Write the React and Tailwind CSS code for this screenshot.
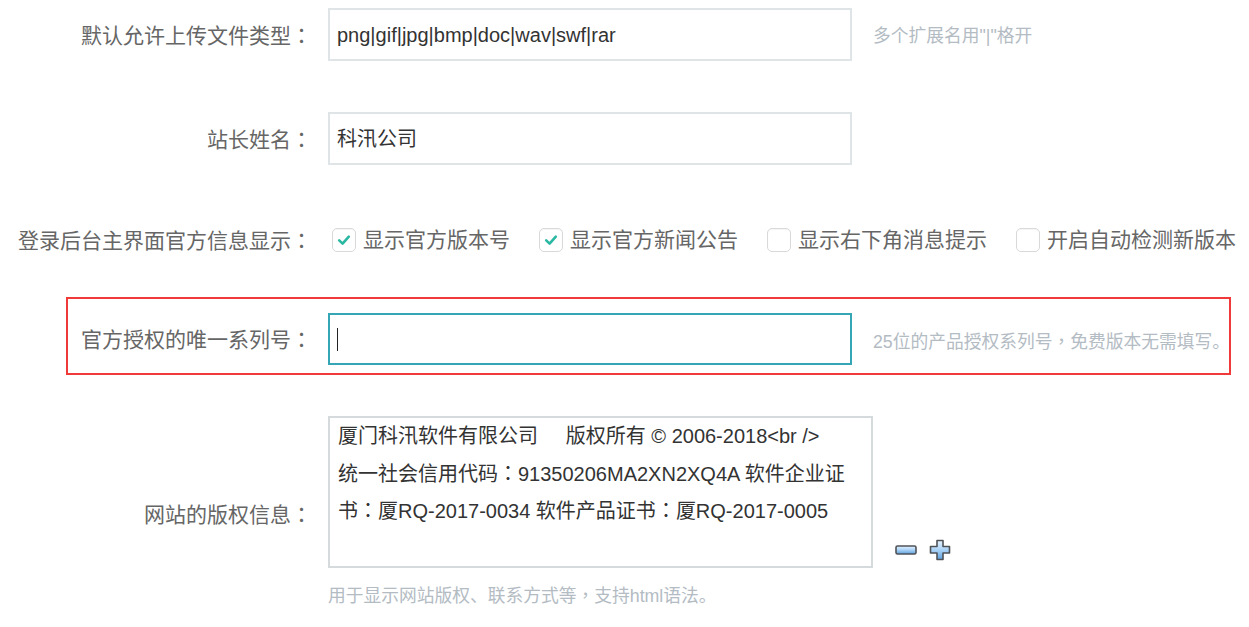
import React from "react";

const FONT = { fontFamily: '"Liberation Sans", "Noto Sans CJK SC", sans-serif' };
const TC = { fontFamily: '"Noto Sans CJK TC", sans-serif' };

function P({ children }) {
  return <span style={TC}>{children}</span>;
}

function Label({ children, className = "" }) {
  return (
    <div className={`shrink-0 whitespace-nowrap text-right text-[21px] leading-none text-[#666] ${className}`}>
      {children}
      <P>：</P>
    </div>
  );
}

function Help({ children, className = "" }) {
  return (
    <div className={`whitespace-nowrap text-[17.75px] leading-[24px] text-[#b3bbc3] ${className}`}>
      {children}
    </div>
  );
}

function Check({ checked, label, last }) {
  return (
    <div className={`flex items-center shrink-0 ${last ? "" : "mr-[29px]"}`}>
      <div className="w-[24px] h-[24px] rounded-[5px] border border-[#d9d9d9] bg-white flex items-center justify-center shadow-[inset_0_1px_1px_rgba(0,0,0,0.04)]">
        {checked && (
          <svg width="16" height="16" viewBox="0 0 16 16">
            <path d="M3.2 8.4 L6.6 11.6 L12.8 4.6" fill="none" stroke="#2bb8a3" strokeWidth="2.6" strokeLinecap="round" strokeLinejoin="round" />
          </svg>
        )}
      </div>
      <span className="ml-[7px] whitespace-nowrap text-[21px] leading-none text-[#666]">{label}</span>
    </div>
  );
}

function MinusIcon() {
  return (
    <svg width="22" height="12" viewBox="0 0 22 12">
      <defs>
        <linearGradient id="gm" x1="0" y1="0" x2="0" y2="1">
          <stop offset="0" stopColor="#e6f3ff" />
          <stop offset="0.5" stopColor="#a9d2f7" />
          <stop offset="1" stopColor="#5e9fdc" />
        </linearGradient>
      </defs>
      <rect x="1" y="2" width="20" height="8" rx="1.5" fill="url(#gm)" stroke="#4f5358" strokeWidth="1.6" />
    </svg>
  );
}

function PlusIcon() {
  return (
    <svg width="22" height="22" viewBox="0 0 22 22">
      <defs>
        <linearGradient id="gp" x1="0" y1="0" x2="0" y2="1">
          <stop offset="0" stopColor="#e6f3ff" />
          <stop offset="0.5" stopColor="#a9d2f7" />
          <stop offset="1" stopColor="#5e9fdc" />
        </linearGradient>
      </defs>
      <path
        d="M8 1.5 H14 V7.5 H20.5 V14 H14 V20.5 H8 V14 H1.5 V7.5 H8 Z"
        fill="url(#gp)"
        stroke="#4f5358"
        strokeWidth="1.6"
        strokeLinejoin="round"
      />
    </svg>
  );
}

export default function App() {
  return (
    <div className="w-[1249px] h-[627px] bg-white overflow-hidden pt-[8px]" style={FONT}>
      {/* Row 1 */}
      <div className="flex items-center h-[53px]">
        <Label className="w-[312px]">默认允许上传文件类型</Label>
        <div className="shrink-0 ml-[16px] w-[524px] h-[53px] border-2 border-[#dfe4e7] flex items-center pl-[7px] text-[20px] text-[#333]">
          png|gif|jpg|bmp|doc|wav|swf|rar
        </div>
        <Help className="ml-[21px] mt-[2px]">多个扩展名用"|"格开</Help>
      </div>

      {/* Row 2 */}
      <div className="flex items-center h-[53px] mt-[51px]">
        <Label className="w-[312px]">站长姓名</Label>
        <div className="shrink-0 ml-[16px] w-[524px] h-[53px] border-2 border-[#dfe4e7] flex items-center pl-[7px] text-[20px] text-[#333]">
          科汛公司
        </div>
      </div>

      {/* Row 3 */}
      <div className="flex items-center h-[53px] mt-[48px]">
        <Label className="w-[312px]">登录后台主界面官方信息显示</Label>
        <div className="ml-[20px] flex items-center">
          <Check checked label="显示官方版本号" />
          <Check checked label="显示官方新闻公告" />
          <Check label="显示右下角消息提示" />
          <Check label="开启自动检测新版本" last />
        </div>
      </div>

      {/* Row 4 (highlighted) */}
      <div className="mt-[31px] ml-[66px] w-[1165px] border-2 border-[#f03a3a] pt-[14px] pb-[8px] flex items-center">
        <Label className="w-[244px]">官方授权的唯一系列号</Label>
        <div className="shrink-0 ml-[16px] w-[524px] h-[52px] border-2 border-[#35a6b6] flex items-center pl-[7px]">
          <span className="block w-[1px] h-[23px] bg-[#222]" />
        </div>
        <Help className="ml-[21px] mt-[4px]">
          25位的产品授权系列号<P>，</P>免费版本无需填写。
        </Help>
      </div>

      {/* Row 5 */}
      <div className="mt-[41px] flex items-center">
        <Label className="w-[312px] mt-[4px]">网站的版权信息</Label>
        <div className="ml-[16px] flex flex-col">
          <div className="flex items-end">
            <div className="shrink-0 w-[545px] h-[152px] border-2 border-[#d5dadd] pl-[8px] pt-[1px] text-[20px] leading-[35.5px] text-[#333] whitespace-pre">
              <div>{"厦门科汛软件有限公司     版权所有 © 2006-2018<br />"}</div>
              <div>
                统一社会信用代码<P>：</P>91350206MA2XN2XQ4A 软件企业证
              </div>
              <div>
                书<P>：</P>厦RQ-2017-0034 软件产品证书<P>：</P>厦RQ-2017-0005
              </div>
            </div>
            <div className="flex items-center ml-[22px] mb-[7px] gap-[12px]">
              <MinusIcon />
              <PlusIcon />
            </div>
          </div>
          <Help className="mt-[14px]">
            用于显示网站版权、联系方式等<P>，</P>支持html语法。
          </Help>
        </div>
      </div>
    </div>
  );
}
